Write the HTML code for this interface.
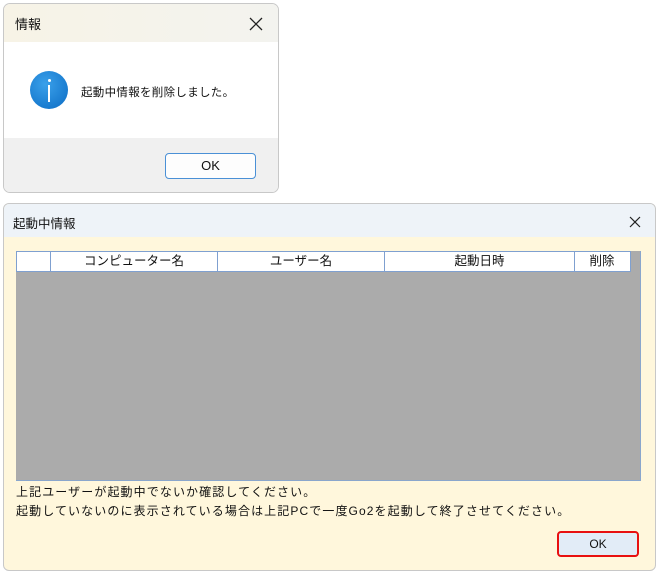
<!DOCTYPE html>
<html><head><meta charset="utf-8"><style>
body{margin:0;width:657px;height:573px;background:#fff;position:relative;font-family:"Liberation Sans","Noto Sans CJK JP",sans-serif;overflow:hidden}
.a{position:absolute}
</style></head><body>
<div class="a" style="left:3px;top:3px;width:274px;height:188px;border:1px solid #c8c8c8;border-radius:7px;overflow:hidden;background:#fff">
 <div class="a" style="left:0;top:0;width:274px;height:38px;background:linear-gradient(90deg,#f7f3e6,#f3f3ef)"></div>
 <div class="a" style="left:11px;top:10px;font-size:13px;color:#111">情報</div>
 <svg class="a" style="left:245px;top:13px" width="14" height="14"><path d="M1 1L13 13M13 1L1 13" stroke="#222" stroke-width="1.3"/></svg>
 <div class="a" style="left:0;top:134px;width:274px;height:54px;background:#f0f0f0"></div>
 <div class="a" style="left:26px;top:67px;width:38px;height:38px;border-radius:50%;background:radial-gradient(circle at 40% 35%,#3aa0ea,#0b6cc4)"></div>
 <div class="a" style="left:43.5px;top:75px;width:3px;height:3px;background:#fff;border-radius:50%"></div>
 <div class="a" style="left:44px;top:81px;width:2px;height:17px;background:#fff"></div>
 <div class="a" style="left:77px;top:80px;font-size:11.5px;color:#111;letter-spacing:0.3px">起動中情報を削除しました。</div>
 <div class="a" style="left:161px;top:149px;width:89px;height:24px;border:1px solid #4a90d6;border-radius:4px;background:#fdfdfd;font-size:13px;text-align:center;line-height:24px;color:#111">OK</div>
</div>
<div class="a" style="left:3px;top:203px;width:651px;height:366px;border:1px solid #c8c8c8;border-radius:6px;overflow:hidden;background:#fff7dc">
 <div class="a" style="left:0;top:0;width:651px;height:33px;background:#eef3f8"></div>
 <div class="a" style="left:9px;top:9px;font-size:12.5px;color:#111">起動中情報</div>
 <svg class="a" style="left:625px;top:12px" width="12" height="12"><path d="M1 1L11 11M11 1L1 11" stroke="#222" stroke-width="1.2"/></svg>
 <div class="a" style="left:12px;top:47px;width:624px;height:229px;background:#ababab;border-right:1px solid #8aa6cc;border-bottom:1px solid #8aa6cc"></div>
 <div class="a" style="left:12px;top:47px;width:613px;height:19px;background:#fff;border:1px solid #7fa0d0;font-size:12.5px;color:#111;line-height:19px">
  <div class="a" style="left:33px;top:0;width:166px;height:19px;border-left:1px solid #7fa0d0;text-align:center">コンピューター名</div>
  <div class="a" style="left:200px;top:0;width:166px;height:19px;border-left:1px solid #7fa0d0;text-align:center">ユーザー名</div>
  <div class="a" style="left:367px;top:0;width:189px;height:19px;border-left:1px solid #7fa0d0;border-right:1px solid #7fa0d0;text-align:center">起動日時</div>
  <div class="a" style="left:557px;top:0;width:56px;height:19px;text-align:center">削除</div>
 </div>
 <div class="a" style="left:12px;top:279px;font-size:12px;color:#111;line-height:19px;letter-spacing:1.1px;white-space:nowrap">上記ユーザーが起動中でないか確認してください。<br>起動していないのに表示されている場合は上記PCで一度Go2を起動して終了させてください。</div>
 <div class="a" style="left:553px;top:327px;width:78px;height:22px;border:2px solid #e81010;border-radius:4px;background:#e2ecf7;font-size:12px;text-align:center;line-height:22px;color:#111">OK</div>
</div>
</body></html>
